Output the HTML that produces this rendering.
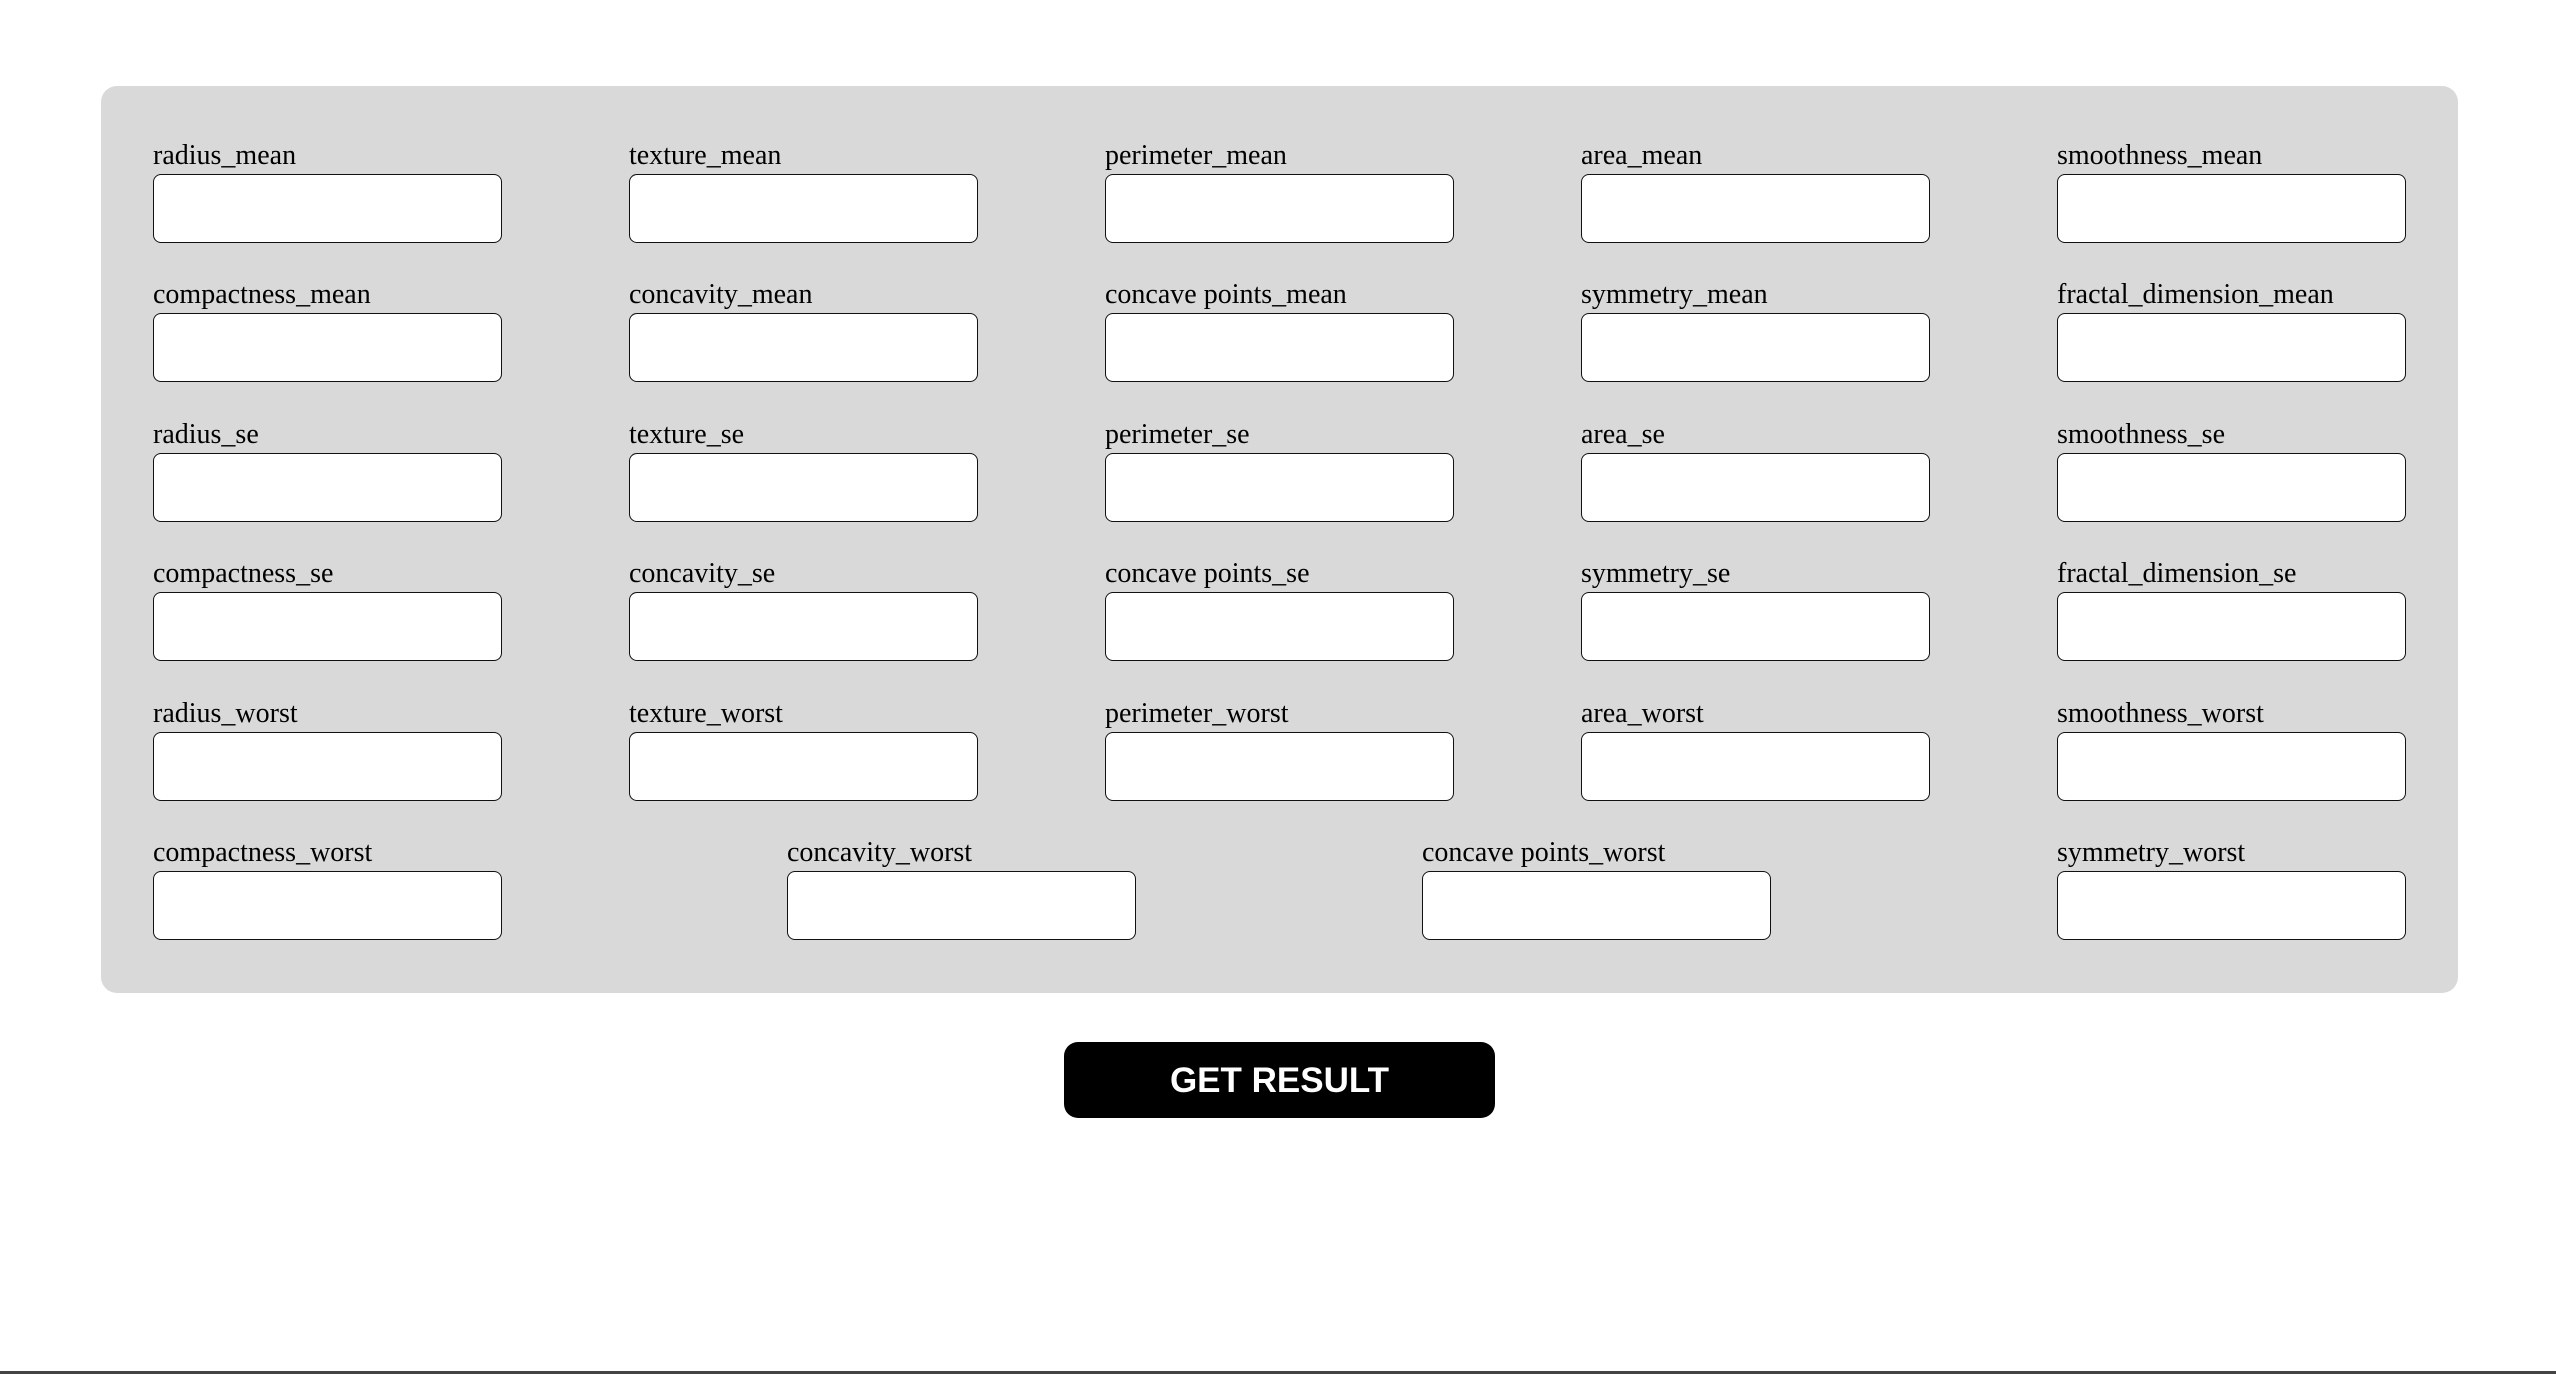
<!DOCTYPE html>
<html><head><style>
body{margin:0;width:2556px;height:1374px;background:#fff;position:relative;overflow:hidden;font-family:"Liberation Serif",serif;}
.panel{position:absolute;left:101px;top:86px;width:2357px;height:907px;background:#d9d9d9;border-radius:16px;}
.f{position:absolute;}
.f label{position:absolute;left:0;top:-34px;font-size:28px;line-height:32px;color:#000;white-space:nowrap;}
.f div{width:347px;height:67px;background:#fff;border:1px solid #111;border-radius:8px;}
.btn{position:absolute;left:1064px;top:1042px;width:431px;height:76px;background:#000;border-radius:14px;color:#fff;font:bold 35px "Liberation Sans",sans-serif;text-align:center;line-height:78px;}
.line{position:absolute;left:0;top:1371px;width:2556px;height:3px;background:#444;}
</style></head><body>
<div class="panel"></div>
<div id="g"></div>
<div class="btn">GET RESULT</div>
<div class="line"></div>
<script>
var names=["radius_mean","texture_mean","perimeter_mean","area_mean","smoothness_mean","compactness_mean","concavity_mean","concave points_mean","symmetry_mean","fractal_dimension_mean","radius_se","texture_se","perimeter_se","area_se","smoothness_se","compactness_se","concavity_se","concave points_se","symmetry_se","fractal_dimension_se","radius_worst","texture_worst","perimeter_worst","area_worst","smoothness_worst"];
var last=["compactness_worst","concavity_worst","concave points_worst","symmetry_worst"];
var xs=[153,629,1105,1581,2057],ys=[174,313,453,592,732];
var h="";
names.forEach(function(n,i){h+='<div class="f" style="left:'+xs[i%5]+'px;top:'+ys[Math.floor(i/5)]+'px"><label>'+n+'</label><div></div></div>';});
var lx=[153,787,1422,2057];
last.forEach(function(n,i){h+='<div class="f" style="left:'+lx[i]+'px;top:871px"><label>'+n+'</label><div></div></div>';});
document.getElementById("g").innerHTML=h;
</script>
</body></html>
